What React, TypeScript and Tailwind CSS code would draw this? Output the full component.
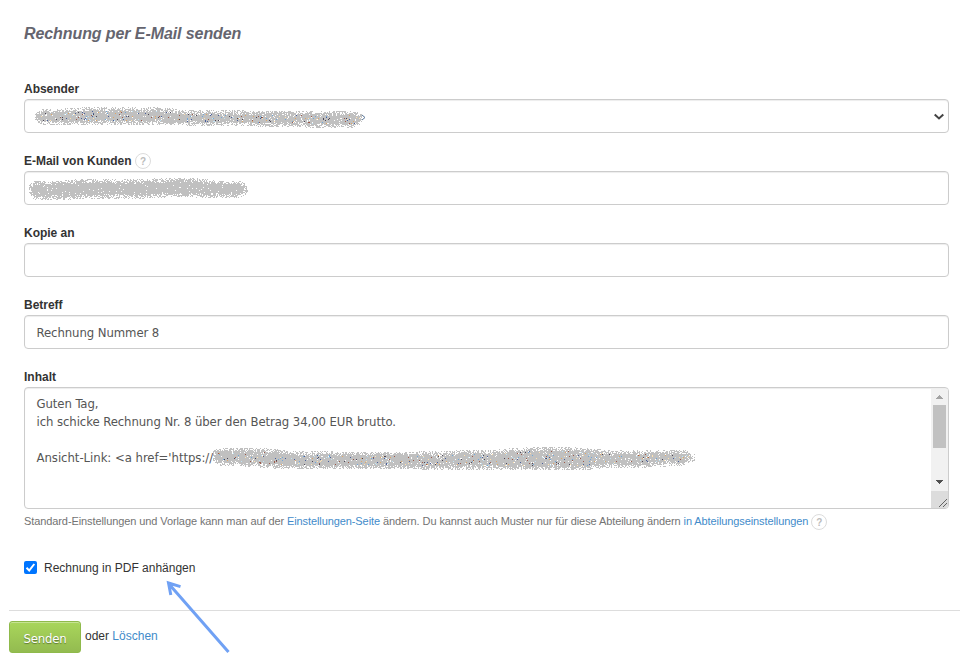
import type { ReactNode } from 'react'

type Point = [x: number, top: number, bottom: number]

const SPECKS = ['#4b4556', '#6fa8dc', '#e0a868', '#9c5a4a', '#4a5f9c', '#bfe3f5', '#ffe2b0']

const SENDER_BAND: Point[] = [[0, 7, 14], [6, 3, 17], [45, 1, 18], [95, 0, 17], [125, 1, 18], [150, 3, 18], [215, 4, 19], [270, 4, 20], [300, 4, 21], [320, 5, 20], [327, 8, 15]]
const CUSTOMER_BAND: Point[] = [[0, 7, 17], [5, 3, 21], [35, 3, 22], [55, 1, 20], [90, 2, 21], [140, 0, 19], [165, 0, 19], [185, 3, 20], [210, 3, 19], [219, 8, 15]]
const LINK_BAND: Point[] = [[0, 5, 15], [6, 2, 19], [45, 2, 21], [75, 5, 23], [120, 6, 23], [205, 6, 23], [280, 4, 24], [325, 1, 24], [365, 2, 24], [390, 4, 22], [435, 5, 21], [470, 4, 19], [482, 9, 14]]

function seeded(seed: number) {
  let s = seed
  return () => {
    s = (s * 1664525 + 1013904223) % 4294967296
    return s / 4294967296
  }
}

function buildSpray(points: Point[], seed: number, specks: boolean) {
  const rand = seeded(seed)
  const paths: Record<string, string> = {}
  const width = points[points.length - 1][0]
  for (let x = 0; x < width; x++) {
    const i = points.findIndex((p) => p[0] > x)
    const a = points[i - 1]
    const b = points[i]
    const t = (x - a[0]) / (b[0] - a[0])
    const top = a[1] + (b[1] - a[1]) * t
    const bottom = a[2] + (b[2] - a[2]) * t
    for (let y = Math.floor(top); y < bottom; y++) {
      const edge = Math.min(y - top + 1, bottom - y, x + 1, width - x)
      const fill = edge < 2 ? 0.4 : edge < 3 ? 0.6 : edge < 4 ? 0.75 : edge < 5 ? 0.88 : 0.96
      const inner = y - top > 3 && bottom - y > 4 && x > 4
      const roll = rand()
      let color = roll < fill ? '#c0c0c0' : ''
      if (specks && inner && rand() < 0.06) color = SPECKS[Math.floor(rand() * SPECKS.length)]
      if (color) paths[color] = (paths[color] ?? '') + `M${x} ${y}h1v1h-1z`
    }
  }
  return paths
}

interface SprayProps {
  points: Point[]
  seed: number
  specks?: boolean
  className?: string
}

function Spray({ points, seed, specks = false, className = '' }: SprayProps) {
  const paths = buildSpray(points, seed, specks)
  const width = points[points.length - 1][0]
  return (
    <svg width={width} height={25} shapeRendering="crispEdges" className={`shrink-0 ${className}`}>
      {Object.entries(paths).map(([color, d]) => <path key={color} d={d} fill={color} />)}
    </svg>
  )
}

function Help() {
  return (
    <span className="inline-flex h-4 w-4 items-center justify-center rounded-full border border-[#dcdcdc] pt-px text-[10px] font-bold leading-none tracking-normal text-[#bcbcbc]">?</span>
  )
}

function Field({ label, help, children }: { label: string; help?: boolean; children?: ReactNode }) {
  return (
    <div className="mb-[18px]">
      <div className="flex h-5 items-center gap-[3.5px] text-xs font-bold tracking-[-0.03px] text-[#333]">
        <span>{label}</span>
        {help && <Help />}
      </div>
      <div className="flex h-[34px] items-start overflow-hidden rounded border border-[#ccc] bg-white shadow-[inset_0_1px_1px_rgba(0,0,0,0.075)]">
        {children}
      </div>
    </div>
  )
}

const inputText = "font-['DejaVu_Sans_Condensed','DejaVu_Sans',sans-serif] [font-stretch:condensed] text-[13px] tracking-[-0.08px] text-[#555]"

export default function App() {
  return (
    <div className="relative h-[665px] w-[960px] overflow-hidden bg-white font-['Liberation_Sans',Arial,sans-serif] text-xs text-[#333]">
      <div className="pl-6 pr-[11px]">
        <h1 className="pt-6 text-base font-bold italic leading-5 tracking-[-0.09px] text-[#65656f]">Rechnung per E-Mail senden</h1>

        <form className="pt-[35px]">
          <Field label="Absender">
            <Spray points={SENDER_BAND} seed={17} specks className="ml-2.5 mt-[7px]" />
            <svg width="4" height="7" className="mt-[14px] shrink-0" fill="none" stroke="#5b7799">
              <path d="M0 1l3 2.5L0 6" />
            </svg>
            <svg width="12" height="8" viewBox="0 0 12 8" className="ml-auto mr-[3px] mt-[12.5px]" fill="none" stroke="#444" strokeWidth="2">
              <path d="M1.7 1.5L6 5.5l4.3-4" />
            </svg>
          </Field>
          <Field label="E-Mail von Kunden" help>
            <Spray points={CUSTOMER_BAND} seed={91} className="ml-1 mt-[6px]" />
          </Field>
          <Field label="Kopie an" />
          <Field label="Betreff">
            <span className={`pl-[11.5px] pt-px leading-8 ${inputText}`}>Rechnung Nummer 8</span>
          </Field>

          <div className="flex h-5 items-center font-bold">Inhalt</div>
          <div className="flex h-[122px] overflow-hidden rounded border border-[#ccc] shadow-[inset_0_1px_1px_rgba(0,0,0,0.075)]">
            <div className={`flex-1 pl-[11.5px] pt-[7px] leading-[18px] ${inputText}`}>
              <p>Guten Tag,</p>
              <p>ich schicke Rechnung Nr. 8 über den Betrag 34,00 EUR brutto.</p>
              <p>&nbsp;</p>
              <div className="flex h-[18px] items-start">
                <span className="w-[176.5px] shrink-0 whitespace-nowrap tracking-[-0.04px]">{"Ansicht-Link: <a href='https://"}</span>
                <Spray points={LINK_BAND} seed={43} specks className="-mt-[3px]" />
              </div>
            </div>
            <div className="mt-px flex w-[17px] flex-col items-center bg-[#f1f1f1]">
              <svg width="17" height="16" shapeRendering="crispEdges" className="shrink-0">
                <path d="M5 10h7v-1h-1v-1h-1v-1h-1v-1h-1v1h-1v1h-1v1h-1z" fill="#a3a3a3" />
              </svg>
              <div className="h-[43px] w-[13px] shrink-0 bg-[#c1c1c1]" />
              <svg width="17" height="16" shapeRendering="crispEdges" className="mt-auto shrink-0">
                <path d="M5 5h7v1h-1v1h-1v1h-1v1h-1v-1h-1v-1h-1v-1h-1z" fill="#505050" />
              </svg>
              <svg width="17" height="17" className="shrink-0 bg-[#dcdcdc]">
                <path d="M8 16l8-8M12 16l4-4" stroke="#555" strokeWidth="0.9" />
              </svg>
            </div>
          </div>

          <div className="flex h-[26px] items-center whitespace-nowrap text-[11px] tracking-[-0.094px] text-[#737373]">
            <span className="-mt-0.5">
              Standard-Einstellungen und Vorlage kann man auf der <a className="text-[#428bca]">Einstellungen-Seite</a> ändern. Du kannst auch Muster nur für diese Abteilung ändern <a className="text-[#428bca]">in Abteilungseinstellungen</a>
            </span>
            <span className="ml-[3px] flex"><Help /></span>
          </div>

          <label className="mt-[23px] flex h-[18px] items-center">
            <span className="mr-[7px] flex h-[13px] w-[13px] items-center justify-center rounded-[2px] bg-[#0075ff]">
              <svg width="13" height="13" viewBox="0 0 13 13" fill="none" stroke="white" strokeWidth="2">
                <path d="M2.5 6.8l2.7 2.7L10.3 3" />
              </svg>
            </span>
            <span className="pt-0.5">Rechnung in PDF anhängen</span>
          </label>
        </form>
      </div>

      <div className="ml-[9px] mt-[34px] flex items-start border-t border-[#ddd] pt-2.5">
        <button type="button" className="h-8 w-[72px] rounded-[3px] border border-[#8fba4b] bg-linear-to-b from-[#a9d65b] to-[#93bb50] pt-[3px] font-['DejaVu_Sans_Condensed','DejaVu_Sans',sans-serif] text-[13px] tracking-[-0.2px] text-white [font-stretch:condensed] [text-shadow:0_1px_1px_rgba(0,0,0,0.4)] shadow-[inset_0_1px_0_rgba(255,255,255,0.35)]">Senden</button>
        <span className="ml-1 mt-1.5 leading-[18px]">oder <a className="text-[#428bca]">Löschen</a></span>
      </div>

      <svg width="70" height="78" className="absolute left-[163px] top-[578px]" fill="none" stroke="#70a1f4" strokeWidth="3">
        <path d="M65.5 74L5.5 5.5M7.8 17L5.5 5l12 3.6" />
      </svg>
    </div>
  )
}
